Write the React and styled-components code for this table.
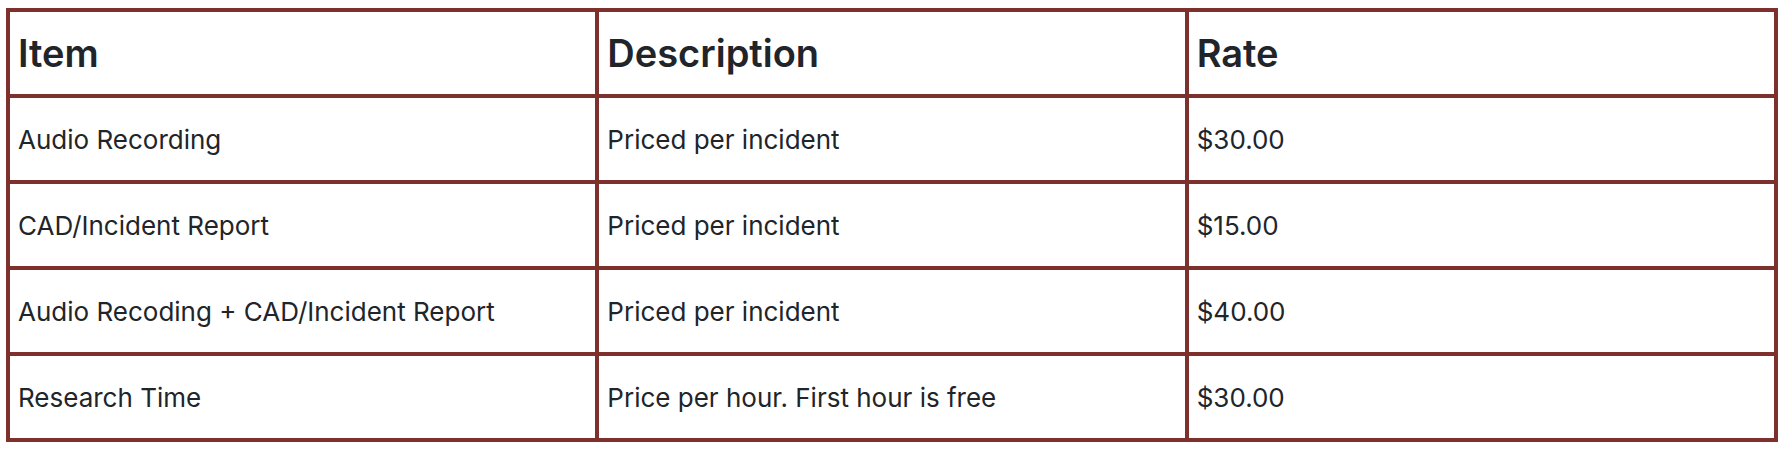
import React from "react";
import styled, { createGlobalStyle } from "styled-components";

const GlobalStyle = createGlobalStyle`
  html, body {
    margin: 0;
    padding: 0;
    background: #ffffff;
  }
  body {
    font-family: Inter, "Noto Sans", "Liberation Sans", sans-serif;
    color: #212529;
  }
`;

const Page = styled.div`
  padding: 8px 0 0 6px;
`;

const Table = styled.table`
  width: 1772px;
  table-layout: fixed;
  border-collapse: collapse;
  border: 4px solid #7d302c;
`;

const Row = styled.tr`
  height: 86px;
`;

const HeadCell = styled.th`
  border: 4px solid #7d302c;
  padding: 0 8px;
  text-align: left;
  vertical-align: middle;
  font-size: 38px;
  font-weight: 600;
  color: #212529;
`;

const Cell = styled.td`
  border: 4px solid #7d302c;
  padding: 0 8px;
  text-align: left;
  vertical-align: middle;
  font-size: 26px;
  font-weight: 400;
  color: #212529;
`;

const rows = [
  { item: "Audio Recording", desc: "Priced per incident", rate: "$30.00" },
  { item: "CAD/Incident Report", desc: "Priced per incident", rate: "$15.00" },
  {
    item: "Audio Recoding + CAD/Incident Report",
    desc: "Priced per incident",
    rate: "$40.00",
  },
  {
    item: "Research Time",
    desc: "Price per hour. First hour is free",
    rate: "$30.00",
  },
];

export default function App() {
  return (
    <Page>
      <GlobalStyle />
      <Table>
        <thead>
          <Row>
            <HeadCell>Item</HeadCell>
            <HeadCell>Description</HeadCell>
            <HeadCell>Rate</HeadCell>
          </Row>
        </thead>
        <tbody>
          {rows.map((r) => (
            <Row key={r.item}>
              <Cell>{r.item}</Cell>
              <Cell>{r.desc}</Cell>
              <Cell>{r.rate}</Cell>
            </Row>
          ))}
        </tbody>
      </Table>
    </Page>
  );
}
